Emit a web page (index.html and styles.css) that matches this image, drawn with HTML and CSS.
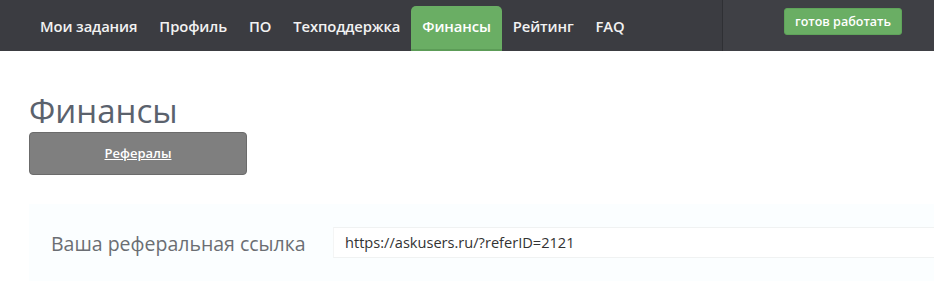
FILE: index.html
```html
<!DOCTYPE html>
<html lang="ru">
<head>
<meta charset="utf-8">
<title>Финансы</title>
<link rel="stylesheet" href="styles.css">
</head>
<body>
<header class="navbar">
  <nav class="nav-main">
    <a class="nav-link" href="#">Мои задания</a>
    <a class="nav-link" href="#">Профиль</a>
    <a class="nav-link" href="#">ПО</a>
    <a class="nav-link" href="#">Техподдержка</a>
    <a class="nav-link active" href="#">Финансы</a>
    <a class="nav-link" href="#">Рейтинг</a>
    <a class="nav-link" href="#">FAQ</a>
  </nav>
  <div class="nav-side">
    <button class="ready-btn">готов работать</button>
  </div>
</header>
<main class="content">
  <h1 class="title">Финансы</h1>
  <div class="tabs">
    <a class="tab-btn" href="#">Рефералы</a>
  </div>
  <section class="ref-panel">
    <span class="ref-label">Ваша реферальная ссылка</span>
    <div class="ref-input">https://askusers.ru/?referID=2121</div>
  </section>
</main>
</body>
</html>
```
FILE: styles.css
```css
* { box-sizing: border-box; }
html, body { margin: 0; padding: 0; background: #fff; }
body {
  font-family: "Open Sans", "Noto Sans", sans-serif;
  width: 934px;
  height: 294px;
  overflow: hidden;
}
.navbar {
  display: flex;
  height: 51px;
  background: #3b3c41;
}
.nav-main {
  display: flex;
  align-items: flex-end;
  width: 723px;
  padding-left: 29px;
  border-right: 1px solid #2f3034;
}
.nav-link {
  display: block;
  height: 45px;
  padding: 8px 11px 0;
  color: #f2f2f2;
  text-decoration: none;
  font-size: 14.8px;
  font-weight: 600;
  line-height: 24px;
  letter-spacing: -0.12px;
}
.nav-link.active {
  background: #6aae64;
  border-radius: 5px 5px 0 0;
  border-bottom: 2px solid #5c9c57;
  color: #fff;
}
.nav-side {
  flex: 1;
  background: #3f4045;
  display: flex;
  justify-content: flex-start;
  padding: 8px 0 0 61px;
}
.ready-btn {
  height: 27px;
  padding: 0 10px;
  background: #6aae64;
  border: 1px solid #5fa45a;
  border-radius: 3px;
  color: #fff;
  font-family: inherit;
  font-size: 12.5px;
  font-weight: 600;
  line-height: 24px;
}
.content {
  padding: 0 0 0 29px;
}
.title {
  margin: 0;
  padding-top: 39px;
  font-size: 33px;
  font-weight: 400;
  line-height: 41px;
  color: #5b626d;
  letter-spacing: 0;
}
.tabs {
  display: flex;
  margin-top: 1px;
}
.tab-btn {
  display: flex;
  align-items: center;
  justify-content: center;
  width: 218px;
  height: 43px;
  background: #7f7f7f;
  border: 1px solid #6b6b6b;
  border-radius: 4px;
  color: #fff;
  font-size: 13px;
  font-weight: 600;
  text-decoration: underline;
  padding-bottom: 2px;
}
.ref-panel {
  display: flex;
  align-items: center;
  margin-top: 29px;
  height: 77px;
  background: #fbfeff;
  padding-left: 22px;
}
.ref-label {
  width: 282px;
  font-size: 19.5px;
  color: #6b6e73;
  padding-top: 2px;
  white-space: nowrap;
}
.ref-input {
  flex: 1;
  height: 31px;
  background: #fff;
  border-top: 1px solid #f0f2f2;
  border-bottom: 1px solid #f0f2f2;
  border-left: 1px solid #f4f5f5;
  padding-left: 11px;
  font-size: 14.6px;
  line-height: 29px;
  color: #333;
}
```
